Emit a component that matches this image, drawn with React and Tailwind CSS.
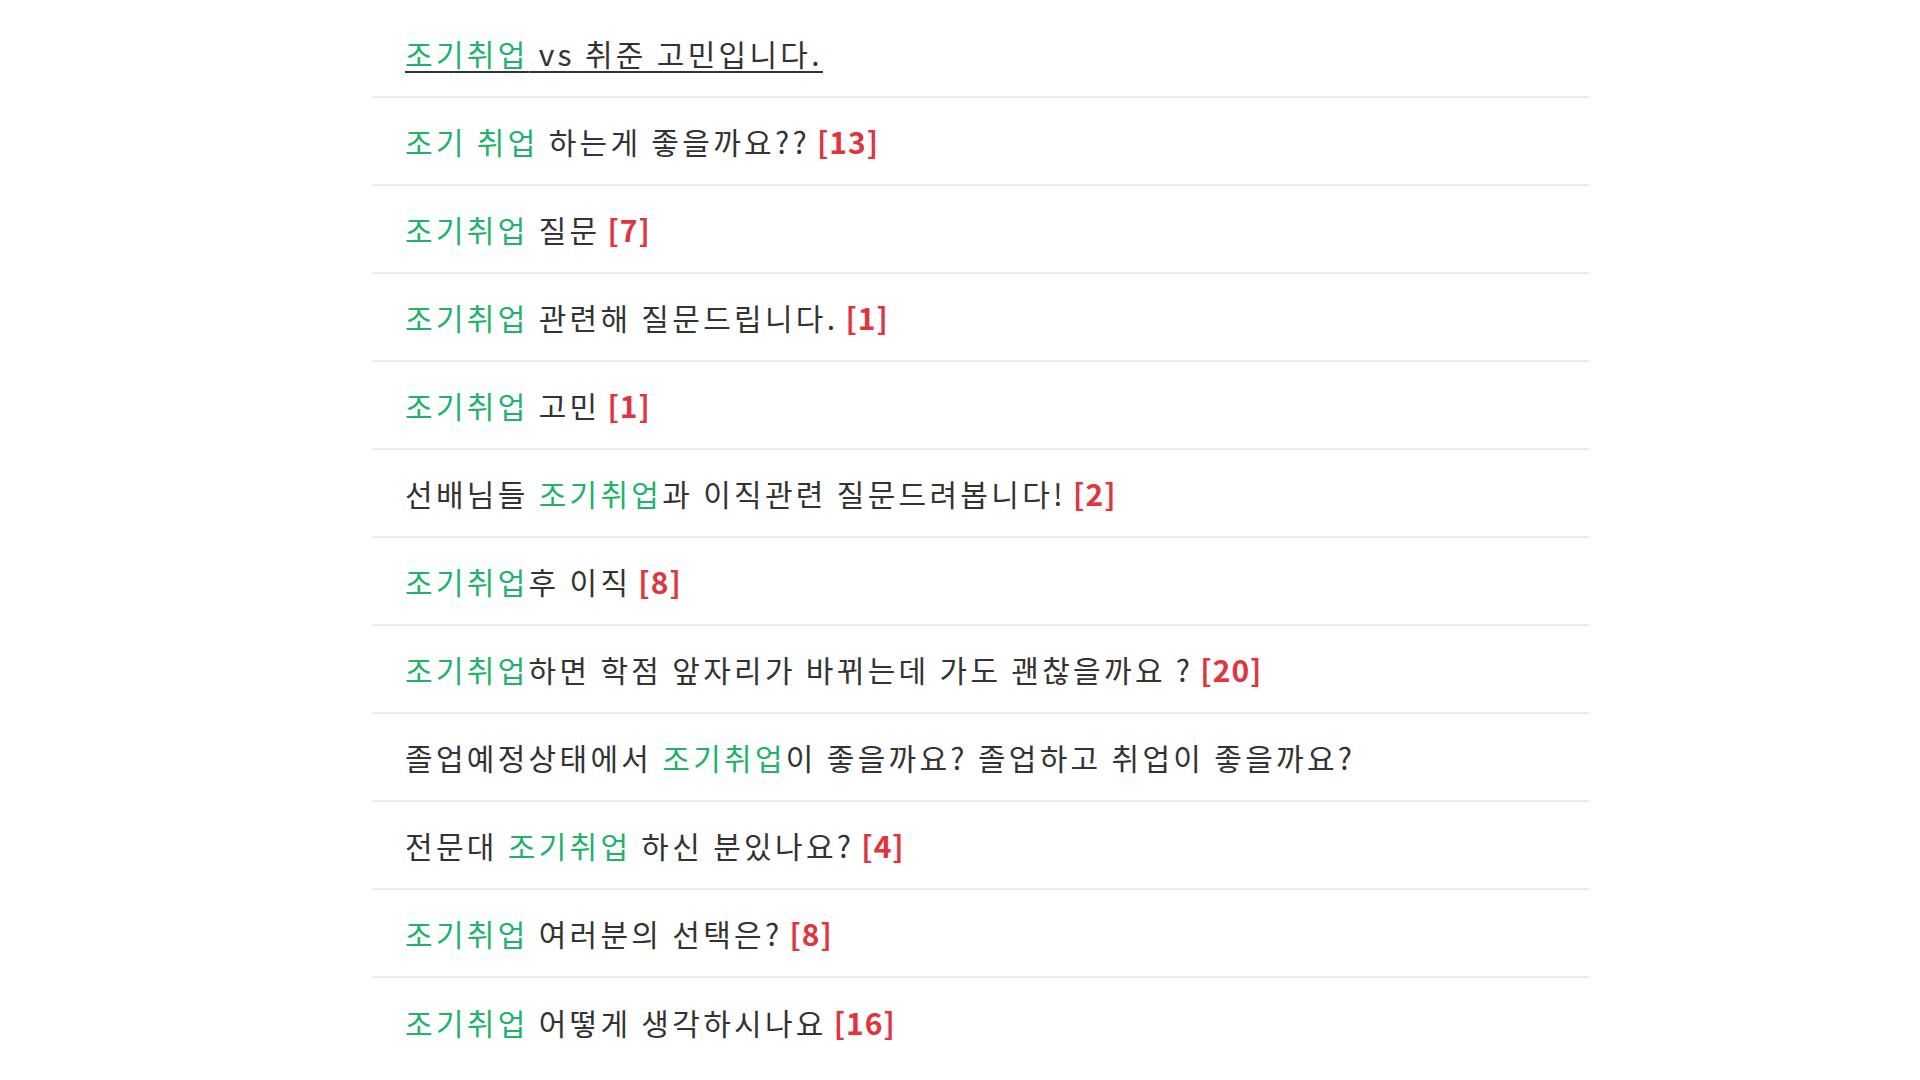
import React from 'react';

const posts = [
    { parts: [['g', '조기취업'], ['t', ' vs 취준 고민입니다.']], active: true },
    { parts: [['g', '조기 취업'], ['t', ' 하는게 좋을까요??']], count: 13 },
    { parts: [['g', '조기취업'], ['t', ' 질문']], count: 7 },
    { parts: [['g', '조기취업'], ['t', ' 관련해 질문드립니다.']], count: 1 },
    { parts: [['g', '조기취업'], ['t', ' 고민']], count: 1 },
    { parts: [['t', '선배님들 '], ['g', '조기취업'], ['t', '과 이직관련 질문드려봅니다!']], count: 2 },
    { parts: [['g', '조기취업'], ['t', '후 이직']], count: 8 },
    { parts: [['g', '조기취업'], ['t', '하면 학점 앞자리가 바뀌는데 가도 괜찮을까요 ?']], count: 20 },
    { parts: [['t', '졸업예정상태에서 '], ['g', '조기취업'], ['t', '이 좋을까요? 졸업하고 취업이 좋을까요?']] },
    { parts: [['t', '전문대 '], ['g', '조기취업'], ['t', ' 하신 분있나요?']], count: 4 },
    { parts: [['g', '조기취업'], ['t', ' 여러분의 선택은?']], count: 8 },
    { parts: [['g', '조기취업'], ['t', ' 어떻게 생각하시나요']], count: 16 },
];

const PostRow = ({ parts, count, active, last }) => (
    <li className={`flex items-center h-[88px] pl-[33px] ${last ? '' : 'border-b-2 border-[#ececec]'}`}>
        <a href="#" className={`text-[#333333] whitespace-pre tracking-[3.3px] ${active ? 'underline underline-offset-[5px] decoration-2' : ''}`}>
            {parts.map(([kind, text], idx) => (
                <span key={idx} className={kind === 'g' ? 'text-[#22b26b]' : ''}>{text}</span>
            ))}
        </a>
        {count !== undefined && (
            <span className="ml-[7px] font-bold tracking-[1px] text-[#e0343f]">[{count}]</span>
        )}
    </li>
);

export default function App() {
    return (
        <div className="min-h-screen bg-white pt-[10px] font-['Noto_Sans_CJK_KR',sans-serif] text-[30px] leading-none">
            <ul className="ml-[372px] w-[1217px]">
                {posts.map((post, idx) => (
                    <PostRow key={idx} {...post} last={idx === posts.length - 1} />
                ))}
            </ul>
        </div>
    );
}
